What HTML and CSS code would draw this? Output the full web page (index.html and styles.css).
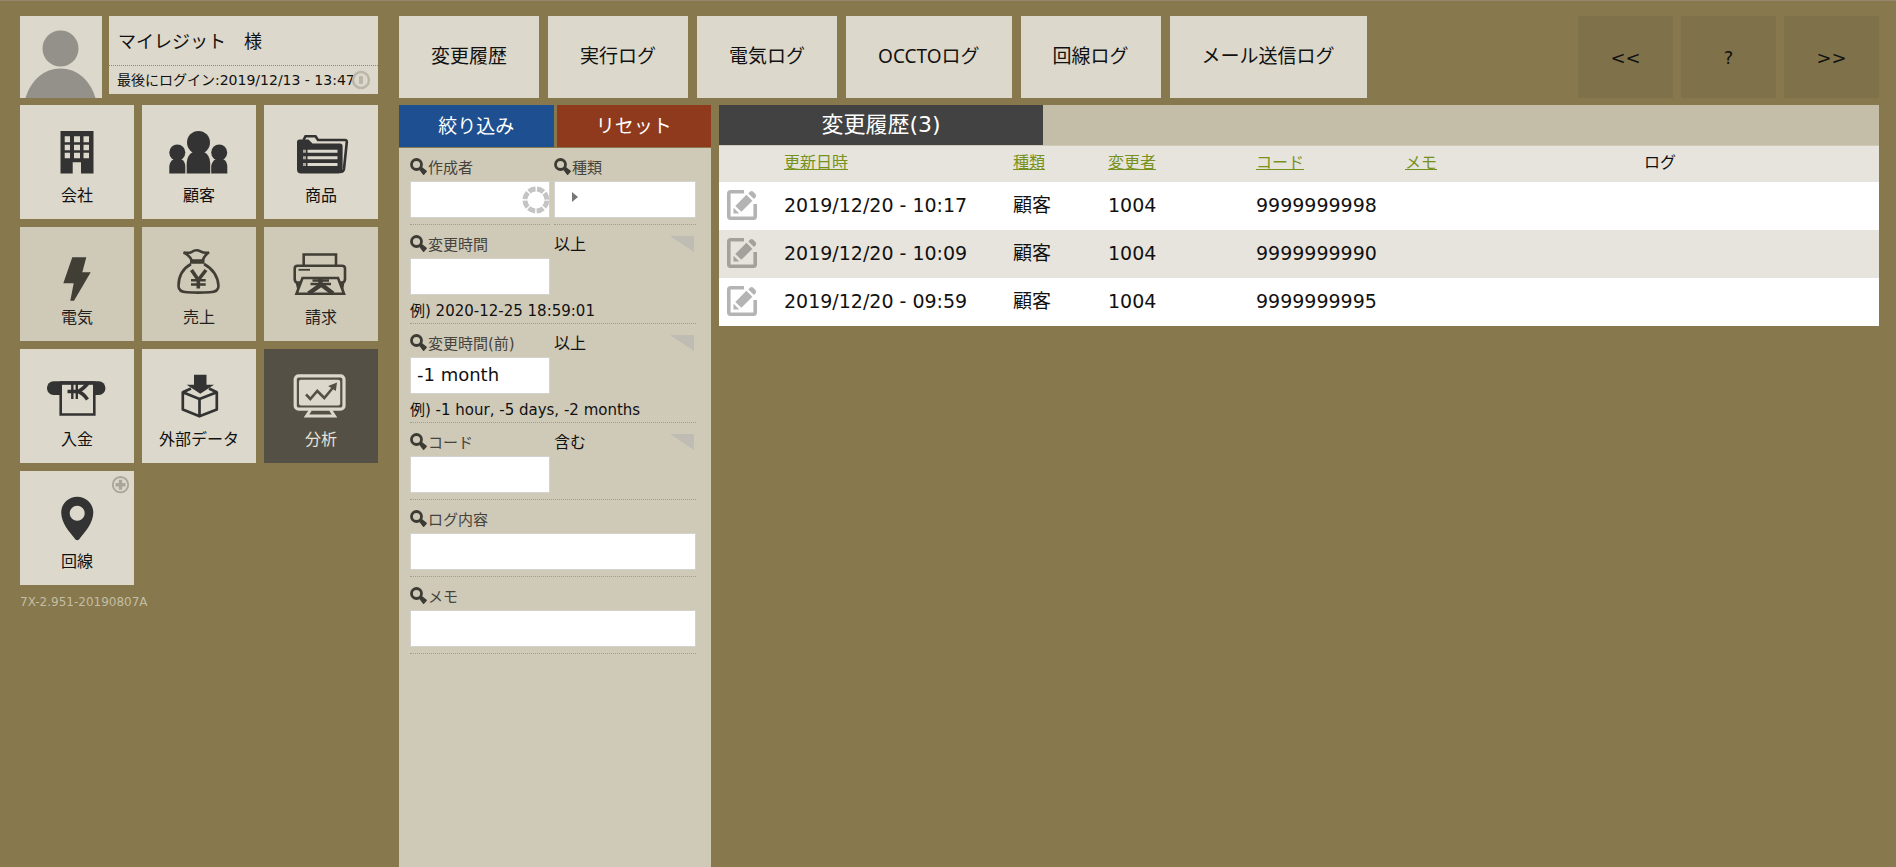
FILE: index.html
```
<!DOCTYPE html>
<html lang="ja">
<head>
<meta charset="utf-8">
<meta name="viewport" content="width=device-width, initial-scale=1">
<title>変更履歴</title>
<link rel="stylesheet" href="styles.css">
</head>
<body>
<svg class="defs" aria-hidden="true">
  <symbol id="search" viewBox="0 0 17 17">
    <circle cx="6.5" cy="6.5" r="5" fill="none" stroke="#3c3b34" stroke-width="2.8"/>
    <path d="M9.4 10.8 11.2 9.2 16.2 13.2 13.6 16.2Z" fill="#3c3b34" stroke="#3c3b34" stroke-width="1.4" stroke-linejoin="round"/>
  </symbol>
  <symbol id="edit" viewBox="0 0 30 30">
    <path d="M17 1.800H3.400A1.600 1.600 0 0 0 1.800 3.400V26.600A1.600 1.600 0 0 0 3.400 28.200H26.600A1.600 1.600 0 0 0 28.200 26.600V14" fill="none" stroke="currentColor" stroke-width="3.600"/>
    <path d="M6.500 17.800 12.300 23.500 6.500 23.500ZM8.300 15.900 19.400 4.800 25.400 10.800 14.400 21.800ZM21.300 3.400 23.200 1.500Q24.800 .4 26.300 1.800L28.600 4.200Q29.800 5.700 28.600 7.300L27 9.100Z" fill="currentColor"/>
  </symbol>
</svg>
<div class="app">
  <aside class="side">
    <div class="user">
      <svg class="avatar" viewBox="0 0 82 82" role="img" aria-label="ユーザー"><circle cx="40.500" cy="32.500" r="18" fill="#94918a"/><path d="M5.500 82C11 64 24 52.500 40.500 52.500S70 64 75.500 82Z" fill="#94918a"/></svg>
      <div class="user-info">
        <div class="user-name">マイレジット　様</div>
        <div class="user-login">最後にログイン:2019/12/13 - 13:47
          <svg class="info-icon" viewBox="0 0 20 20"><circle cx="10" cy="10" r="8" fill="none" stroke="#bbb7a8" stroke-width="2.500"/><rect x="8" y="6" width="4" height="8" rx="1" fill="#bbb7a8"/></svg>
        </div>
      </div>
    </div>
    <nav class="tiles">
      <a class="tile" href="#">
        <svg viewBox="0 0 114 76"><path fill="#333" fill-rule="evenodd" d="M40.500 26h33v42.400H61V57.300h-8.300v11.100H40.500ZM44.700 31.300v6h5.300v-6ZM54 31.300v6h6v-6ZM63.500 31.300v6H69v-6ZM44.700 39.700v5.600h5.300v-5.600ZM54 39.700v5.600h6v-5.600ZM63.500 39.700v5.600H69v-5.600ZM44.700 47.700v5.600h5.300v-5.600ZM54 47.700v5.600h6v-5.600ZM63.500 47.700v5.600H69v-5.600Z"/></svg>
        <span>会社</span></a>
      <a class="tile" href="#">
        <svg viewBox="0 0 114 76"><g fill="#333"><circle cx="56.500" cy="37.500" r="11.500"/><path d="M44.700 68.400V58Q45 50 51 47H62Q68 50 68.200 58V68.400Z"/><circle cx="35.300" cy="47.500" r="8"/><path d="M27.300 68.400V61Q28 56 32 54H39Q43 56 43.300 61V68.400Z"/><circle cx="77.200" cy="47.500" r="8"/><path d="M69.200 68.400V61Q70 56 74 54H81Q85 56 85.300 61V68.400Z"/></g></svg>
        <span>顧客</span></a>
      <a class="tile" href="#">
        <svg viewBox="0 0 114 76"><path d="M39.500 35 41.500 31.300H51.500L54 35H81Q83 35 82.800 37L80 64Q79.500 67 76 67" fill="none" stroke="#333" stroke-width="2.600"/><path d="M33 37Q33 34.500 35.500 34.500H44.500L48.500 38.500H76Q78.600 38.500 78.600 41V64Q78.600 68.400 74.500 68.400H37Q33 68.400 33 64.400Z" fill="#333"/><path d="M43.500 46.300H73.500M43.500 52.800H73.500M43.500 59.500H73.500" stroke="#dcd8cb" stroke-width="3"/><path d="M39 46.300H42M39 52.800H42M39 59.500H42" stroke="#aaa79d" stroke-width="3"/></svg>
        <span>商品</span></a>
      <a class="tile tile-dim" href="#">
        <svg viewBox="0 0 114 76"><path d="M52.300 30.300H66.300L62.300 45.300H70.700L54 73.700H50.300L53.700 56.300H43.300Z" fill="#403e35"/></svg>
        <span>電気</span></a>
      <a class="tile tile-dim" href="#">
        <svg viewBox="0 0 114 76"><g fill="none" stroke="#403e35" stroke-width="2.600"><path d="M50 34Q48 28.500 41.500 25.500 47 26.500 50 24.800 54 22 58.500 24.300 62 26.500 67 25.500 62 28.500 60.500 34"/><path d="M48 34.500H62.500" stroke-width="4.500"/><path d="M49 37C40 42 36.500 50 36.500 59Q36.500 65 45 65.300 56 66 68 65.300 76.500 65 76.500 59C76 50 71 42 62 37"/><path d="M49.500 43 56.300 53 64 43M56.300 52V61.500" stroke-width="3.600"/><path d="M49 53.300H63.700M49 57.500H63.700" stroke-width="2.400"/></g></svg>
        <span>売上</span></a>
      <a class="tile tile-dim" href="#">
        <svg viewBox="0 0 114 76"><g fill="none" stroke="#403e35" stroke-width="2.600"><path d="M39.700 38V27.500H72V38"/><path d="M36 55.500H33.500Q30.700 55.500 30.700 52V41.500Q30.700 38.700 33.500 38.700H78Q81 38.700 81 41.500V52Q81 55.500 78 55.500H76"/><path d="M34.500 42.800H46" stroke-width="1.800"/><path d="M38.500 51H74L80 66.700H32.500Z"/><path d="M48.500 53.500H65M46.500 57H67" stroke-width="2.400"/><path d="M56.500 51V58L44.500 66.500M56.500 57 69 66.500" stroke-width="4.400"/></g><path d="M31.500 55H37L33.500 64Z M80.500 55H76L79 64Z" fill="#403e35"/></svg>
        <span>請求</span></a>
      <a class="tile" href="#">
        <svg viewBox="0 0 114 76"><rect x="27" y="32.300" width="58.400" height="13.600" rx="6.500" fill="#333"/><path d="M40.700 34.500V65.500H74.300V34.500Z" fill="#dcd8cb" stroke="#333" stroke-width="2.600"/><path d="M39.600 33.800H75.400" stroke="#333" stroke-width="3"/><path d="M47.500 42.500H58.500M58 42.500Q62 41 67.800 34.500M58 42.500Q63 44 67.500 50.500" fill="none" stroke="#333" stroke-width="3.600"/><path d="M52.300 35V50M56.800 35V50" stroke="#333" stroke-width="2.400"/></svg>
        <span>入金</span></a>
      <a class="tile" href="#">
        <svg viewBox="0 0 114 76"><g fill="none" stroke="#333" stroke-width="2.700" stroke-linejoin="round"><path d="M40.800 43.300 57.500 50 74.800 43.300V60.500L57.500 67.300 40.800 60.500ZM57.500 50V67.500M40.800 43.300 49 39.500M74.800 43.300 67 39.500"/></g><path d="M52 25.700H64.500V35.700H72L58.300 44.700 44.700 35.700H52Z" fill="#333"/></svg>
        <span>外部データ</span></a>
      <a class="tile tile-active" href="#" aria-current="page">
        <svg viewBox="0 0 114 76"><rect x="31.200" y="26.800" width="48.800" height="33.400" rx="3.500" fill="none" stroke="#dcd8cb" stroke-width="3.200"/><rect x="35" y="30.700" width="41.200" height="25.800" rx="2" fill="#dcd8cb"/><path d="M46.500 61 42.500 67H70.500L66.500 61" fill="none" stroke="#dcd8cb" stroke-width="3"/><path d="M42 45.300 46.300 50 53.300 42 60.300 49 69.500 38" fill="none" stroke="#545045" stroke-width="2.600"/><path d="M73 33.500 71.800 42 64.200 37Z" fill="#545045"/></svg>
        <span>分析</span></a>
      <a class="tile" href="#">
        <svg viewBox="0 0 114 76"><path fill="#333" fill-rule="evenodd" d="M57.200 25.700C66 25.700 73.300 32.500 73.300 41.500 73.300 52 65 61 59 68.500Q57.200 70 55.500 68.500C49.500 61 41.200 52 41.200 41.500 41.200 32.500 48.500 25.700 57.200 25.700ZM57.200 34.800a7.500 7.500 0 1 0 .01 0Z"/><circle cx="100.500" cy="13.700" r="7.700" fill="none" stroke="#aaa698" stroke-width="1.800"/><path d="M100.500 8.700V18.700M95.500 13.700H105.500" stroke="#aaa698" stroke-width="3.400"/></svg>
        <span>回線</span></a>
    </nav>
    <div class="version">7X-2.951-20190807A</div>
  </aside>

  <div class="main">
    <header class="top">
      <nav class="tabs">
        <a href="#">変更履歴</a><a href="#">実行ログ</a><a href="#">電気ログ</a><a href="#">OCCTOログ</a><a href="#">回線ログ</a><a href="#">メール送信ログ</a>
      </nav>
      <div class="pager">
        <button type="button">&lt;&lt;</button><button type="button">?</button><button type="button">&gt;&gt;</button>
      </div>
    </header>
    <div class="content">
      <form class="filter">
        <div class="filter-actions">
          <button class="apply" type="button">絞り込み</button>
          <button class="reset" type="reset">リセット</button>
        </div>
        <div class="fields">
          <div class="pair">
            <div class="field">
              <label for="author"><svg class="search"><use href="#search"/></svg>作成者</label>
              <div class="box">
                <input id="author" type="text">
                <svg class="spinner" viewBox="0 0 28 28"><circle cx="14" cy="14" r="11" fill="none" stroke="#c4c4c4" stroke-width="5" stroke-dasharray="7.140 1.500" stroke-dashoffset="-.7"/></svg>
              </div>
            </div>
            <div class="field">
              <label for="kind"><svg class="search"><use href="#search"/></svg>種類</label>
              <div class="box">
                <select id="kind" class="kind"><option></option></select>
                <svg class="caret" viewBox="0 0 6 10"><path d="M0 0 6 5 0 10Z" fill="#777"/></svg>
              </div>
            </div>
          </div>
          <div class="field cond">
            <label for="time"><svg class="search"><use href="#search"/></svg>変更時間</label>
            <select aria-label="変更時間の条件"><option>以上</option></select>
            <input id="time" type="text">
            <p>例) 2020-12-25 18:59:01</p>
          </div>
          <div class="field cond">
            <label for="before"><svg class="search"><use href="#search"/></svg>変更時間(前)</label>
            <select aria-label="変更時間(前)の条件"><option>以上</option></select>
            <input id="before" type="text" value="-1 month">
            <p>例) -1 hour, -5 days, -2 months</p>
          </div>
          <div class="field cond">
            <label for="code"><svg class="search"><use href="#search"/></svg>コード</label>
            <select aria-label="コードの条件"><option>含む</option></select>
            <input id="code" type="text">
          </div>
          <div class="field">
            <label for="log"><svg class="search"><use href="#search"/></svg>ログ内容</label>
            <input id="log" type="text">
          </div>
          <div class="field">
            <label for="memo"><svg class="search"><use href="#search"/></svg>メモ</label>
            <input id="memo" type="text">
          </div>
        </div>
      </form>

      <section class="results">
        <div class="results-bar"><h1>変更履歴(3)</h1></div>
        <table>
          <colgroup><col class="c-edit"><col class="c-date"><col class="c-kind"><col class="c-user"><col class="c-code"><col class="c-memo"><col></colgroup>
          <thead>
            <tr><th></th><th><a href="#">更新日時</a></th><th><a href="#">種類</a></th><th><a href="#">変更者</a></th><th><a href="#">コード</a></th><th><a href="#">メモ</a></th><th class="log">ログ</th></tr>
          </thead>
          <tbody>
            <tr><td><a class="edit" href="#" aria-label="編集"><svg><use href="#edit"/></svg></a></td><td>2019/12/20 - 10:17</td><td>顧客</td><td>1004</td><td>9999999998</td><td></td><td></td></tr>
            <tr><td><a class="edit" href="#" aria-label="編集"><svg><use href="#edit"/></svg></a></td><td>2019/12/20 - 10:09</td><td>顧客</td><td>1004</td><td>9999999990</td><td></td><td></td></tr>
            <tr><td><a class="edit" href="#" aria-label="編集"><svg><use href="#edit"/></svg></a></td><td>2019/12/20 - 09:59</td><td>顧客</td><td>1004</td><td>9999999995</td><td></td><td></td></tr>
          </tbody>
        </table>
      </section>
    </div>
  </div>
</div>
</body>
</html>
```
FILE: styles.css
```
* { box-sizing: border-box; }

body {
  margin: 0;
  background: #87794d;
  color: #111;
  font-family: "DejaVu Sans", "Noto Sans CJK JP", sans-serif;
  font-size: 16px;
}

a { color: inherit; text-decoration: none; }
button, input, select { font: inherit; color: inherit; border: 0; border-radius: 0; margin: 0; padding: 0; }
button { cursor: pointer; }
.defs { display: none; }

.app {
  display: flex;
  gap: 21px;
  min-height: 100vh;
  padding: 15px 17px 0 20px;
  border-top: 1px solid #94866a;
}

/* Sidebar */
.side { width: 358px; flex: none; }
.user { display: flex; gap: 7px; height: 82px; margin-bottom: 7px; align-items: flex-start; }
.avatar { width: 82px; height: 82px; flex: none; background: #dcd8cb; }
.user-info { flex: 1; background: #dcd8cb; }
.user-name { height: 50px; line-height: 52px; padding-left: 9px; font-size: 18px; border-bottom: 1px dotted #8a877c; }
.user-login { position: relative; height: 28px; line-height: 28px; padding-left: 8px; font-size: 14px; white-space: nowrap; }
.info-icon { position: absolute; right: 7px; top: 4px; width: 20px; height: 20px; }

.tiles { display: grid; grid-template-columns: repeat(3, 1fr); gap: 8px; }
.tile { display: flex; flex-direction: column; height: 114px; background: #dcd8cb; text-align: center; }
.tile svg { height: 76px; width: 100%; }
.tile span { line-height: 30px; }
.tile-dim { background: #cfc9b8; color: #22211c; }
.tile-active { background: #545045; color: #e6e2d6; }
.version { margin-top: 7px; font-size: 12px; line-height: 20px; color: #c4bda3; }

/* Main area */
.main { flex: 1; min-width: 0; display: flex; flex-direction: column; gap: 7px; }
.top { display: flex; justify-content: space-between; height: 82px; font-size: 19px; }
.tabs { display: flex; gap: 9px; }
.pager { display: flex; gap: 8px; }
.tabs a {
  display: flex;
  align-items: center;
  padding: 0 32px 4px;
  background: #dcd8cb;
  font-family: "Noto Sans", "Noto Sans CJK JP", sans-serif;
  white-space: nowrap;
}
.pager button { width: 95px; background: #7f724a; font-size: 18px; }

.content { flex: 1; display: flex; gap: 8px; align-items: stretch; }

/* Filter panel */
.filter { width: 312px; flex: none; background: #cfc9b8; }
.filter-actions { display: grid; grid-template-columns: 1fr 1fr; gap: 3px; height: 43px; padding-bottom: 1px; background: #87794d; }
.filter-actions button { padding-bottom: 4px; color: #fff; font-size: 19px; }
.apply { background: #1e4f90; }
.reset { background: #8f391d; }
.fields { padding: 0 15px 0 11px; font-size: 15px; }
.pair { display: grid; grid-template-columns: 140px 1fr; gap: 4px; }
.field { padding: 7px 0 6px; border-bottom: 1px dotted #a19c90; }
.field label { display: flex; align-items: center; gap: 1px; height: 26px; padding-bottom: 4px; color: #45433c; white-space: nowrap; }
.search { width: 17px; height: 17px; flex: none; }
.field input { display: block; width: 100%; height: 37px; padding: 0 6px 2px; background: #fff; border: 1px solid #d3d2ce; font-size: 18px; }
.box { position: relative; }
.spinner { position: absolute; right: 0; top: 5px; width: 28px; height: 28px; }
.kind { display: block; appearance: none; width: 100%; height: 37px; border: 1px solid #d3d2ce; background: #fff; }
.caret { position: absolute; left: 18px; top: 11px; width: 6px; height: 10px; }
.cond { display: grid; grid-template-columns: 140px 1fr; column-gap: 4px; }
.cond select {
  appearance: none;
  height: 26px;
  padding-bottom: 2px;
  font-size: 16px;
  background: linear-gradient(to top right, transparent 50%, #bfbcb3 50%) no-repeat right 2px top 4px / 24px 16px;
}
.cond p { grid-column: 1 / -1; margin: 4px 0 -6px; line-height: 24px; white-space: nowrap; }

/* Results */
.results { flex: 1; min-width: 0; }
.results-bar { background: #c4bda7; height: 41px; border-bottom: 1px solid #cfc9b8; }
.results-bar h1 { margin: 0; width: 324px; line-height: 40px; background: #424242; color: #fff; text-align: center; font-size: 22px; font-weight: 400; }
table { width: 100%; table-layout: fixed; border-collapse: collapse; background: #fff; }
.c-edit { width: 65px; }
.c-date { width: 229px; }
.c-kind { width: 95px; }
.c-user { width: 148px; }
.c-code { width: 149px; }
.c-memo { width: 36px; }
th, td { padding: 0; text-align: left; font-weight: 400; white-space: nowrap; }
th { height: 36px; padding-bottom: 2px; line-height: 24px; background: #e7e4dd; }
th a { color: #76921d; text-decoration: underline; }
th.log { text-align: center; }
td { height: 48px; padding-bottom: 2px; line-height: 24px; font-size: 19px; }
tbody tr:nth-child(even) { background: #e7e4dd; }
.edit { display: block; width: 30px; height: 30px; margin-left: 8px; color: #b4b4b4; }
.edit svg { display: block; width: 30px; height: 30px; }
tbody tr:nth-child(even) .edit { color: #a3a19b; }
```
